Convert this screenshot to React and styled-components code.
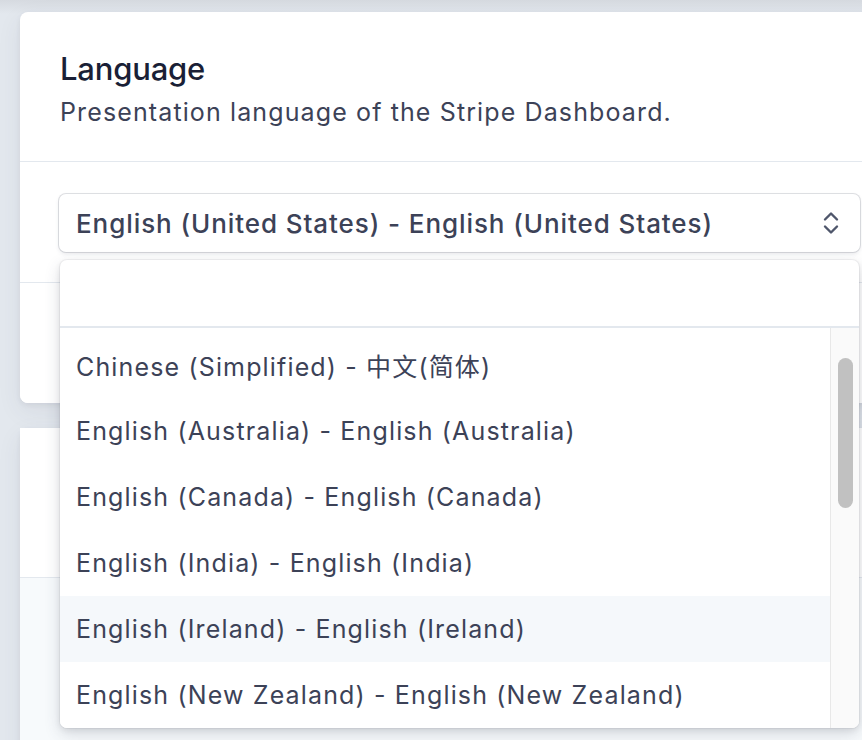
import React from 'react';
import styled, { createGlobalStyle } from 'styled-components';

const GlobalStyle = createGlobalStyle`
    html, body {
        margin: 0;
        padding: 0;
        height: 100%;
        overflow: hidden;
    }
    body {
        background: linear-gradient(#d6dae0 0, #e3e8ee 14px, #e3e8ee 100%);
        font-family: Inter, "Noto Sans", "Noto Sans CJK SC", sans-serif;
        -webkit-font-smoothing: antialiased;
    }
`;

const Page = styled.div`
    display: flex;
    flex-direction: column;
    gap: 25px;
    padding: 12px 0 0 20px;
`;

const Card = styled.section`
    width: calc(100% + 20px);
    background: #fff;
    border-radius: 8px;
    box-shadow: 0 2px 5px rgba(60, 66, 87, 0.08), 0 8px 24px rgba(60, 66, 87, 0.08);
`;

const CardHeader = styled.div`
    height: 150px;
    box-sizing: border-box;
    padding: 38px 40px 0;
    border-bottom: 1px solid #e3e8ee;
`;

const Title = styled.h2`
    margin: 0;
    font-size: 31px;
    font-weight: 500;
    color: #1a1f36;
    line-height: 38px;
    letter-spacing: -0.2px;
`;

const Subtitle = styled.p`
    margin: 8px 0 0;
    font-size: 25px;
    color: #3c4257;
    line-height: 32px;
    letter-spacing: 1.12px;
`;

const CardBody = styled.div`
    height: ${p => p.h}px;
    box-sizing: border-box;
    padding: 32px 0 0 39px;
    border-bottom: ${p => (p.last ? '0' : '1px solid #e3e8ee')};
    background: ${p => (p.tinted ? '#f7fafc' : '#fff')};
    border-radius: ${p => (p.last ? '0 0 8px 8px' : '0')};
`;

const SelectWrap = styled.div`
    position: relative;
    width: 801px;
`;

const SelectBox = styled.div`
    display: flex;
    align-items: center;
    justify-content: space-between;
    height: 58px;
    box-sizing: border-box;
    padding: 0 20px 0 17px;
    border-radius: 7px;
    background: #fff;
    box-shadow: 0 0 0 1px rgba(60, 66, 87, 0.16), 0 2px 4px rgba(60, 66, 87, 0.12);
    font-size: 26px;
    font-weight: 500;
    letter-spacing: 0.92px;
    color: #3c4257;
`;

const Menu = styled.div`
    position: absolute;
    top: calc(100% + 8px);
    left: 1px;
    right: 1px;
    height: 468px;
    display: flex;
    flex-direction: column;
    background: #fff;
    border-radius: 7px;
    box-shadow: 0 0 0 1px rgba(60, 66, 87, 0.06), 0 6px 16px rgba(60, 66, 87, 0.18), 0 2px 6px rgba(0, 0, 0, 0.08);
    overflow: hidden;
    z-index: 10;
`;

const Search = styled.div`
    height: 66px;
    flex: none;
    border-bottom: 2px solid #e3e8ee;
`;

const ListArea = styled.div`
    flex: 1;
    display: flex;
    min-height: 0;
`;

const List = styled.ul`
    flex: 1;
    margin: 0;
    padding: 4px 0 0;
    list-style: none;
`;

const Item = styled.li`
    height: 66px;
    display: flex;
    align-items: center;
    padding-left: 16px;
    font-size: 25px;
    letter-spacing: 1.15px;
    color: #3c4257;
    background: ${p => (p.active ? '#f5f8fb' : '#fff')};
    white-space: nowrap;
`;

const Track = styled.div`
    width: 28px;
    flex: none;
    background: #fafafa;
    border-left: 1px solid #e8e8e8;
    display: flex;
    justify-content: center;
`;

const Thumb = styled.div`
    width: 15px;
    height: 150px;
    margin-top: 30px;
    border-radius: 8px;
    background: #c1c1c1;
`;

const FooterLabel = styled.div`
    padding: 150px 0 0 6px;
    font-size: 25px;
    font-weight: 600;
    color: #1a1f36;
`;

const languages = [
    'Chinese (Simplified) - 中文(简体)',
    'English (Australia) - English (Australia)',
    'English (Canada) - English (Canada)',
    'English (India) - English (India)',
    'English (Ireland) - English (Ireland)',
    'English (New Zealand) - English (New Zealand)',
];

function Chevrons() {
    return (
        <svg width="18" height="26" viewBox="0 0 18 26" fill="none" stroke="#4f566b" strokeWidth="2.4" strokeLinecap="round" strokeLinejoin="round">
            <path d="M3 9.5 L9 3.5 L15 9.5" />
            <path d="M3 16.5 L9 22.5 L15 16.5" />
        </svg>
    );
}

export default function App() {
    return (
        <>
            <GlobalStyle />
            <Page>
                <Card>
                    <CardHeader>
                        <Title>Language</Title>
                        <Subtitle>Presentation language of the Stripe Dashboard.</Subtitle>
                    </CardHeader>
                    <CardBody h={121}>
                        <SelectWrap>
                            <SelectBox>
                                <span>English (United States) - English (United States)</span>
                                <Chevrons />
                            </SelectBox>
                            <Menu>
                                <Search />
                                <ListArea>
                                    <List>
                                        {languages.map((lang, idx) => (
                                            <Item key={`lang_${idx}`} active={idx === 4}>{lang}</Item>
                                        ))}
                                    </List>
                                    <Track>
                                        <Thumb />
                                    </Track>
                                </ListArea>
                            </Menu>
                        </SelectWrap>
                    </CardBody>
                    <CardBody h={120} last />
                </Card>
                <Card>
                    <CardBody h={150} />
                    <CardBody h={400} tinted last>
                        <FooterLabel>Application f</FooterLabel>
                    </CardBody>
                </Card>
            </Page>
        </>
    );
}
